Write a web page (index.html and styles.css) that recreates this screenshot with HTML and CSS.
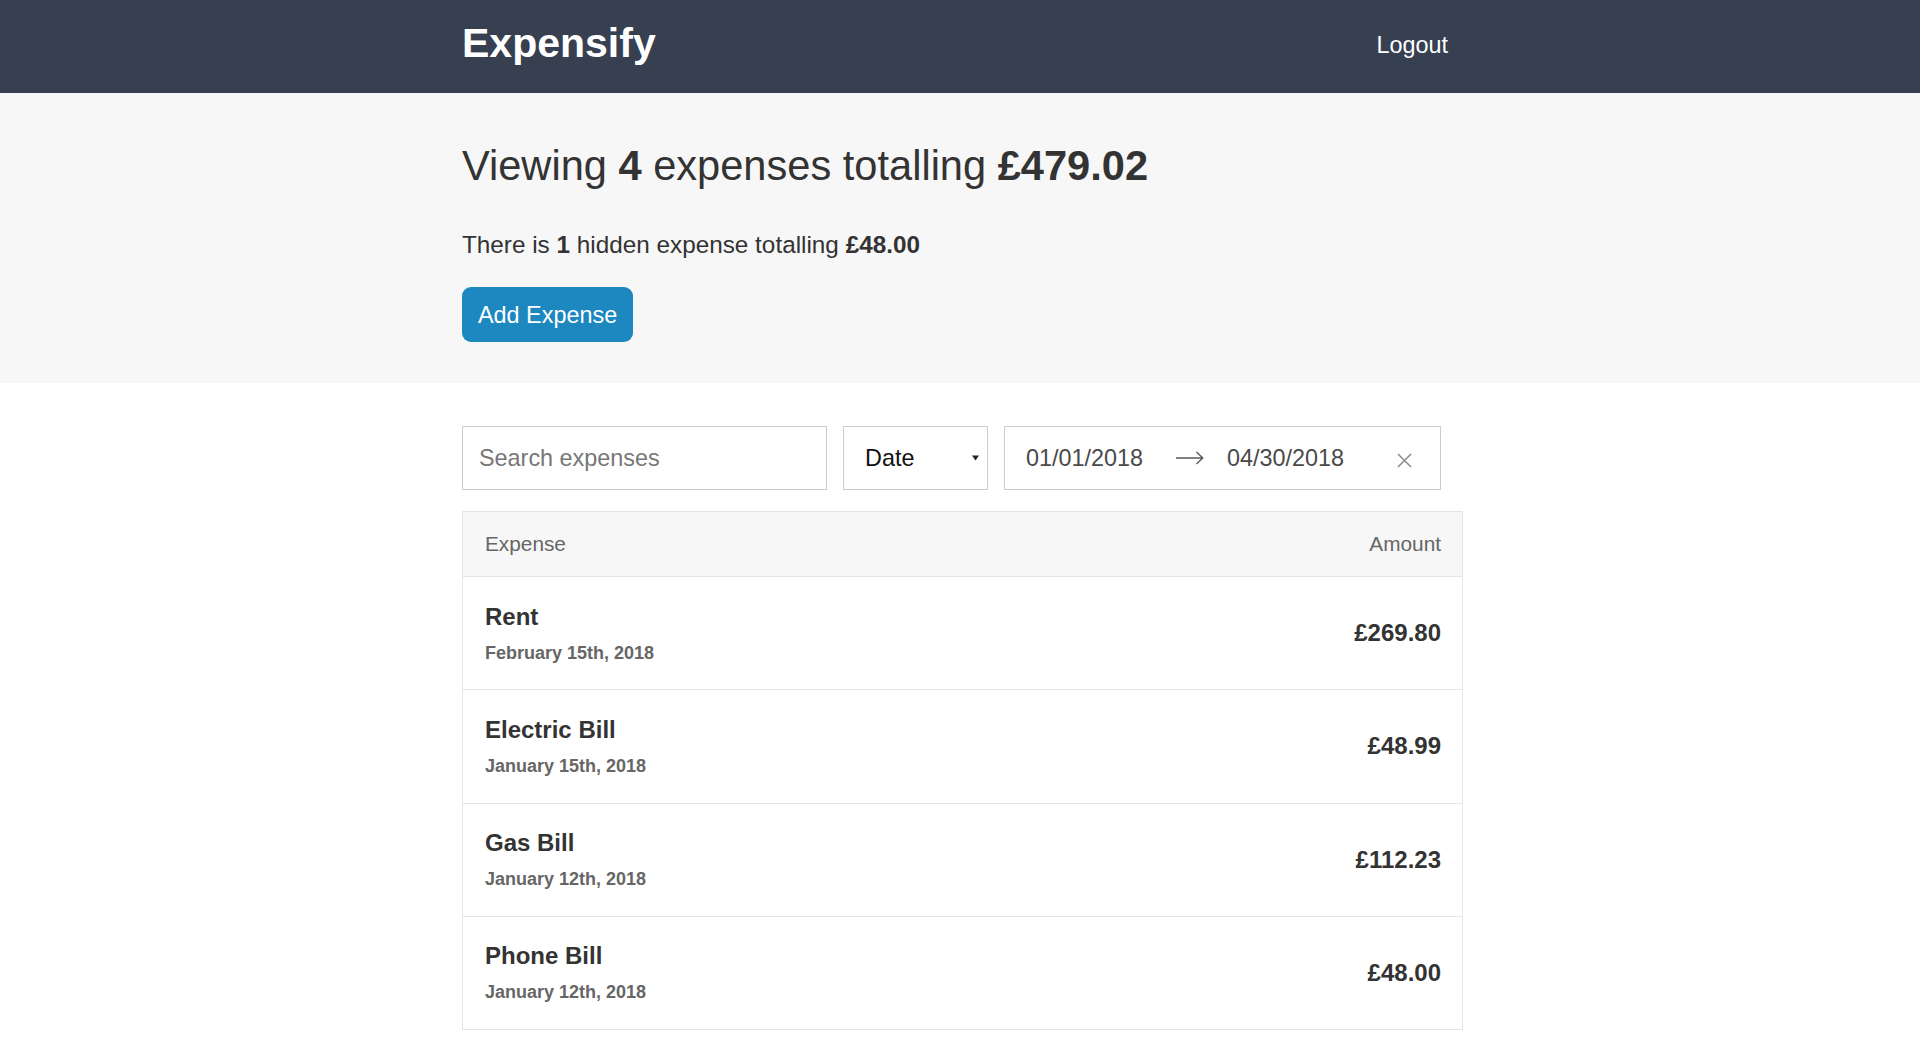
FILE: index.html
```html
<!DOCTYPE html>
<html lang="en">
<head>
<meta charset="utf-8">
<title>Expensify</title>
<link rel="stylesheet" href="styles.css">
</head>
<body>
<header class="header">
  <div class="container header__content">
    <a class="header__title" href="#">Expensify</a>
    <button class="button-link" type="button">Logout</button>
  </div>
</header>

<section class="page-header">
  <div class="container">
    <h1 class="page-header__title">Viewing <b>4</b> expenses totalling <b>£479.02</b></h1>
    <p class="page-header__hidden">There is <b>1</b> hidden expense totalling <b>£48.00</b></p>
    <a class="button" href="#">Add Expense</a>
  </div>
</section>

<main class="container content">
  <div class="filters">
    <input class="text-input" type="text" placeholder="Search expenses">
    <div class="select">
      <span>Date</span>
      <svg class="select__caret" width="7" height="6" viewBox="0 0 7 6"><path d="M0 0.5 H7 L3.5 5.5 Z" fill="#222"/></svg>
    </div>
    <div class="date-range">
      <span class="date-range__start">01/01/2018</span>
      <svg class="date-range__arrow" width="28" height="14" viewBox="0 0 28 14"><path d="M0 7 H26.5 M20.5 1 L26.8 7 L20.5 13" fill="none" stroke="#5a5a5a" stroke-width="1.4"/></svg>
      <span class="date-range__end">04/30/2018</span>
      <svg class="date-range__clear" width="15" height="15" viewBox="0 0 15 15"><path d="M1 1 L14 14 M14 1 L1 14" fill="none" stroke="#8a8a8a" stroke-width="1.5"/></svg>
    </div>
  </div>

  <div class="list">
    <div class="list-header">
      <span>Expense</span>
      <span>Amount</span>
    </div>
    <div class="list-item">
      <div>
        <h3 class="list-item__title">Rent</h3>
        <span class="list-item__sub">February 15th, 2018</span>
      </div>
      <h3 class="list-item__data">£269.80</h3>
    </div>
    <div class="list-item">
      <div>
        <h3 class="list-item__title">Electric Bill</h3>
        <span class="list-item__sub">January 15th, 2018</span>
      </div>
      <h3 class="list-item__data">£48.99</h3>
    </div>
    <div class="list-item">
      <div>
        <h3 class="list-item__title">Gas Bill</h3>
        <span class="list-item__sub">January 12th, 2018</span>
      </div>
      <h3 class="list-item__data">£112.23</h3>
    </div>
    <div class="list-item">
      <div>
        <h3 class="list-item__title">Phone Bill</h3>
        <span class="list-item__sub">January 12th, 2018</span>
      </div>
      <h3 class="list-item__data">£48.00</h3>
    </div>
  </div>
</main>
</body>
</html>
```

FILE: styles.css
```css
* {
  box-sizing: border-box;
}

html, body {
  margin: 0;
  padding: 0;
}

body {
  font-family: "Liberation Sans", Arial, Helvetica, sans-serif;
  color: #333333;
  background: #ffffff;
  font-size: 24px;
  line-height: 1.2;
}

.container {
  width: 1001px;
  margin-left: calc(50% - 498px);
  margin-right: auto;
}

/* Header */
.header {
  background: #364051;
  height: 93px;
}

.header__content {
  height: 93px;
  display: flex;
  align-items: center;
  justify-content: space-between;
}

.header__title {
  color: #ffffff;
  text-decoration: none;
  font-size: 41px;
  font-weight: bold;
  line-height: 1.2;
  padding-bottom: 5px;
}

.button-link {
  background: none;
  border: none;
  color: #ffffff;
  font-family: inherit;
  font-size: 23.4px;
  line-height: 1.2;
  padding: 0 15px 3px 15px;
  cursor: pointer;
}

/* Page header */
.page-header {
  background: #f7f7f7;
  padding: 48px 0 41px 0;
}

.page-header__title {
  margin: 0 0 39px 0;
  font-size: 41.6px;
  font-weight: normal;
  line-height: 1.2;
  color: #333333;
}

.page-header__title b,
.page-header__hidden b {
  font-weight: bold;
}

.page-header__hidden {
  margin: 0 0 28px 0;
  font-size: 24.3px;
  line-height: 1.2;
}

.button {
  display: inline-block;
  background: #1c88bf;
  color: #ffffff;
  text-decoration: none;
  font-size: 23.4px;
  line-height: 28px;
  padding: 13.5px 16px;
  border-radius: 9px;
}

/* Filters */
.content {
  padding-top: 43px;
}

.filters {
  display: flex;
  gap: 16px;
  height: 64px;
  margin-bottom: 21px;
}

.text-input {
  width: 365px;
  height: 64px;
  border: 1px solid #cacccd;
  padding: 0 16px;
  font-family: inherit;
  font-size: 23.4px;
  color: #333333;
  background: #ffffff;
  outline: none;
}

.text-input::placeholder {
  color: #777777;
}

.select {
  width: 145px;
  height: 64px;
  border: 1px solid #cacccd;
  background: #ffffff;
  display: flex;
  align-items: center;
  justify-content: space-between;
  padding: 0 8px 0 21px;
  font-size: 23.4px;
  color: #111111;
}

.date-range {
  width: 437px;
  height: 64px;
  border: 1px solid #cacccd;
  background: #ffffff;
  display: flex;
  align-items: center;
  padding-left: 21px;
  font-size: 23.4px;
  color: #4a4a4a;
}

.date-range__start {
  width: 150px;
}

.date-range__arrow {
  margin-right: 23px;
  flex: none;
}

.date-range__end {
  width: 170px;
}

.date-range__clear {
  flex: none;
  margin-top: 4px;
}

/* List */
.list {
  border-left: 1px solid #e5e5e5;
  border-right: 1px solid #e5e5e5;
}

.list-header {
  display: flex;
  justify-content: space-between;
  background: #f7f7f7;
  border-top: 1px solid #e5e5e5;
  border-bottom: 1px solid #e5e5e5;
  padding: 20px 21px 20px 22px;
  font-size: 20.8px;
  line-height: 24px;
  color: #666666;
}

.list-item {
  display: flex;
  justify-content: space-between;
  align-items: center;
  padding: 24.5px 21px 25.8px 22px;
  border-bottom: 1px solid #e5e5e5;
  background: #ffffff;
}

.list-item__title {
  margin: 0 0 11px 0;
  font-size: 24px;
  line-height: 29px;
  font-weight: bold;
  color: #333333;
}

.list-item__sub {
  display: block;
  font-size: 18px;
  line-height: 22px;
  font-weight: bold;
  color: #666666;
}

.list-item__data {
  margin: 0;
  font-size: 24px;
  line-height: 29px;
  font-weight: bold;
  color: #333333;
}
```
